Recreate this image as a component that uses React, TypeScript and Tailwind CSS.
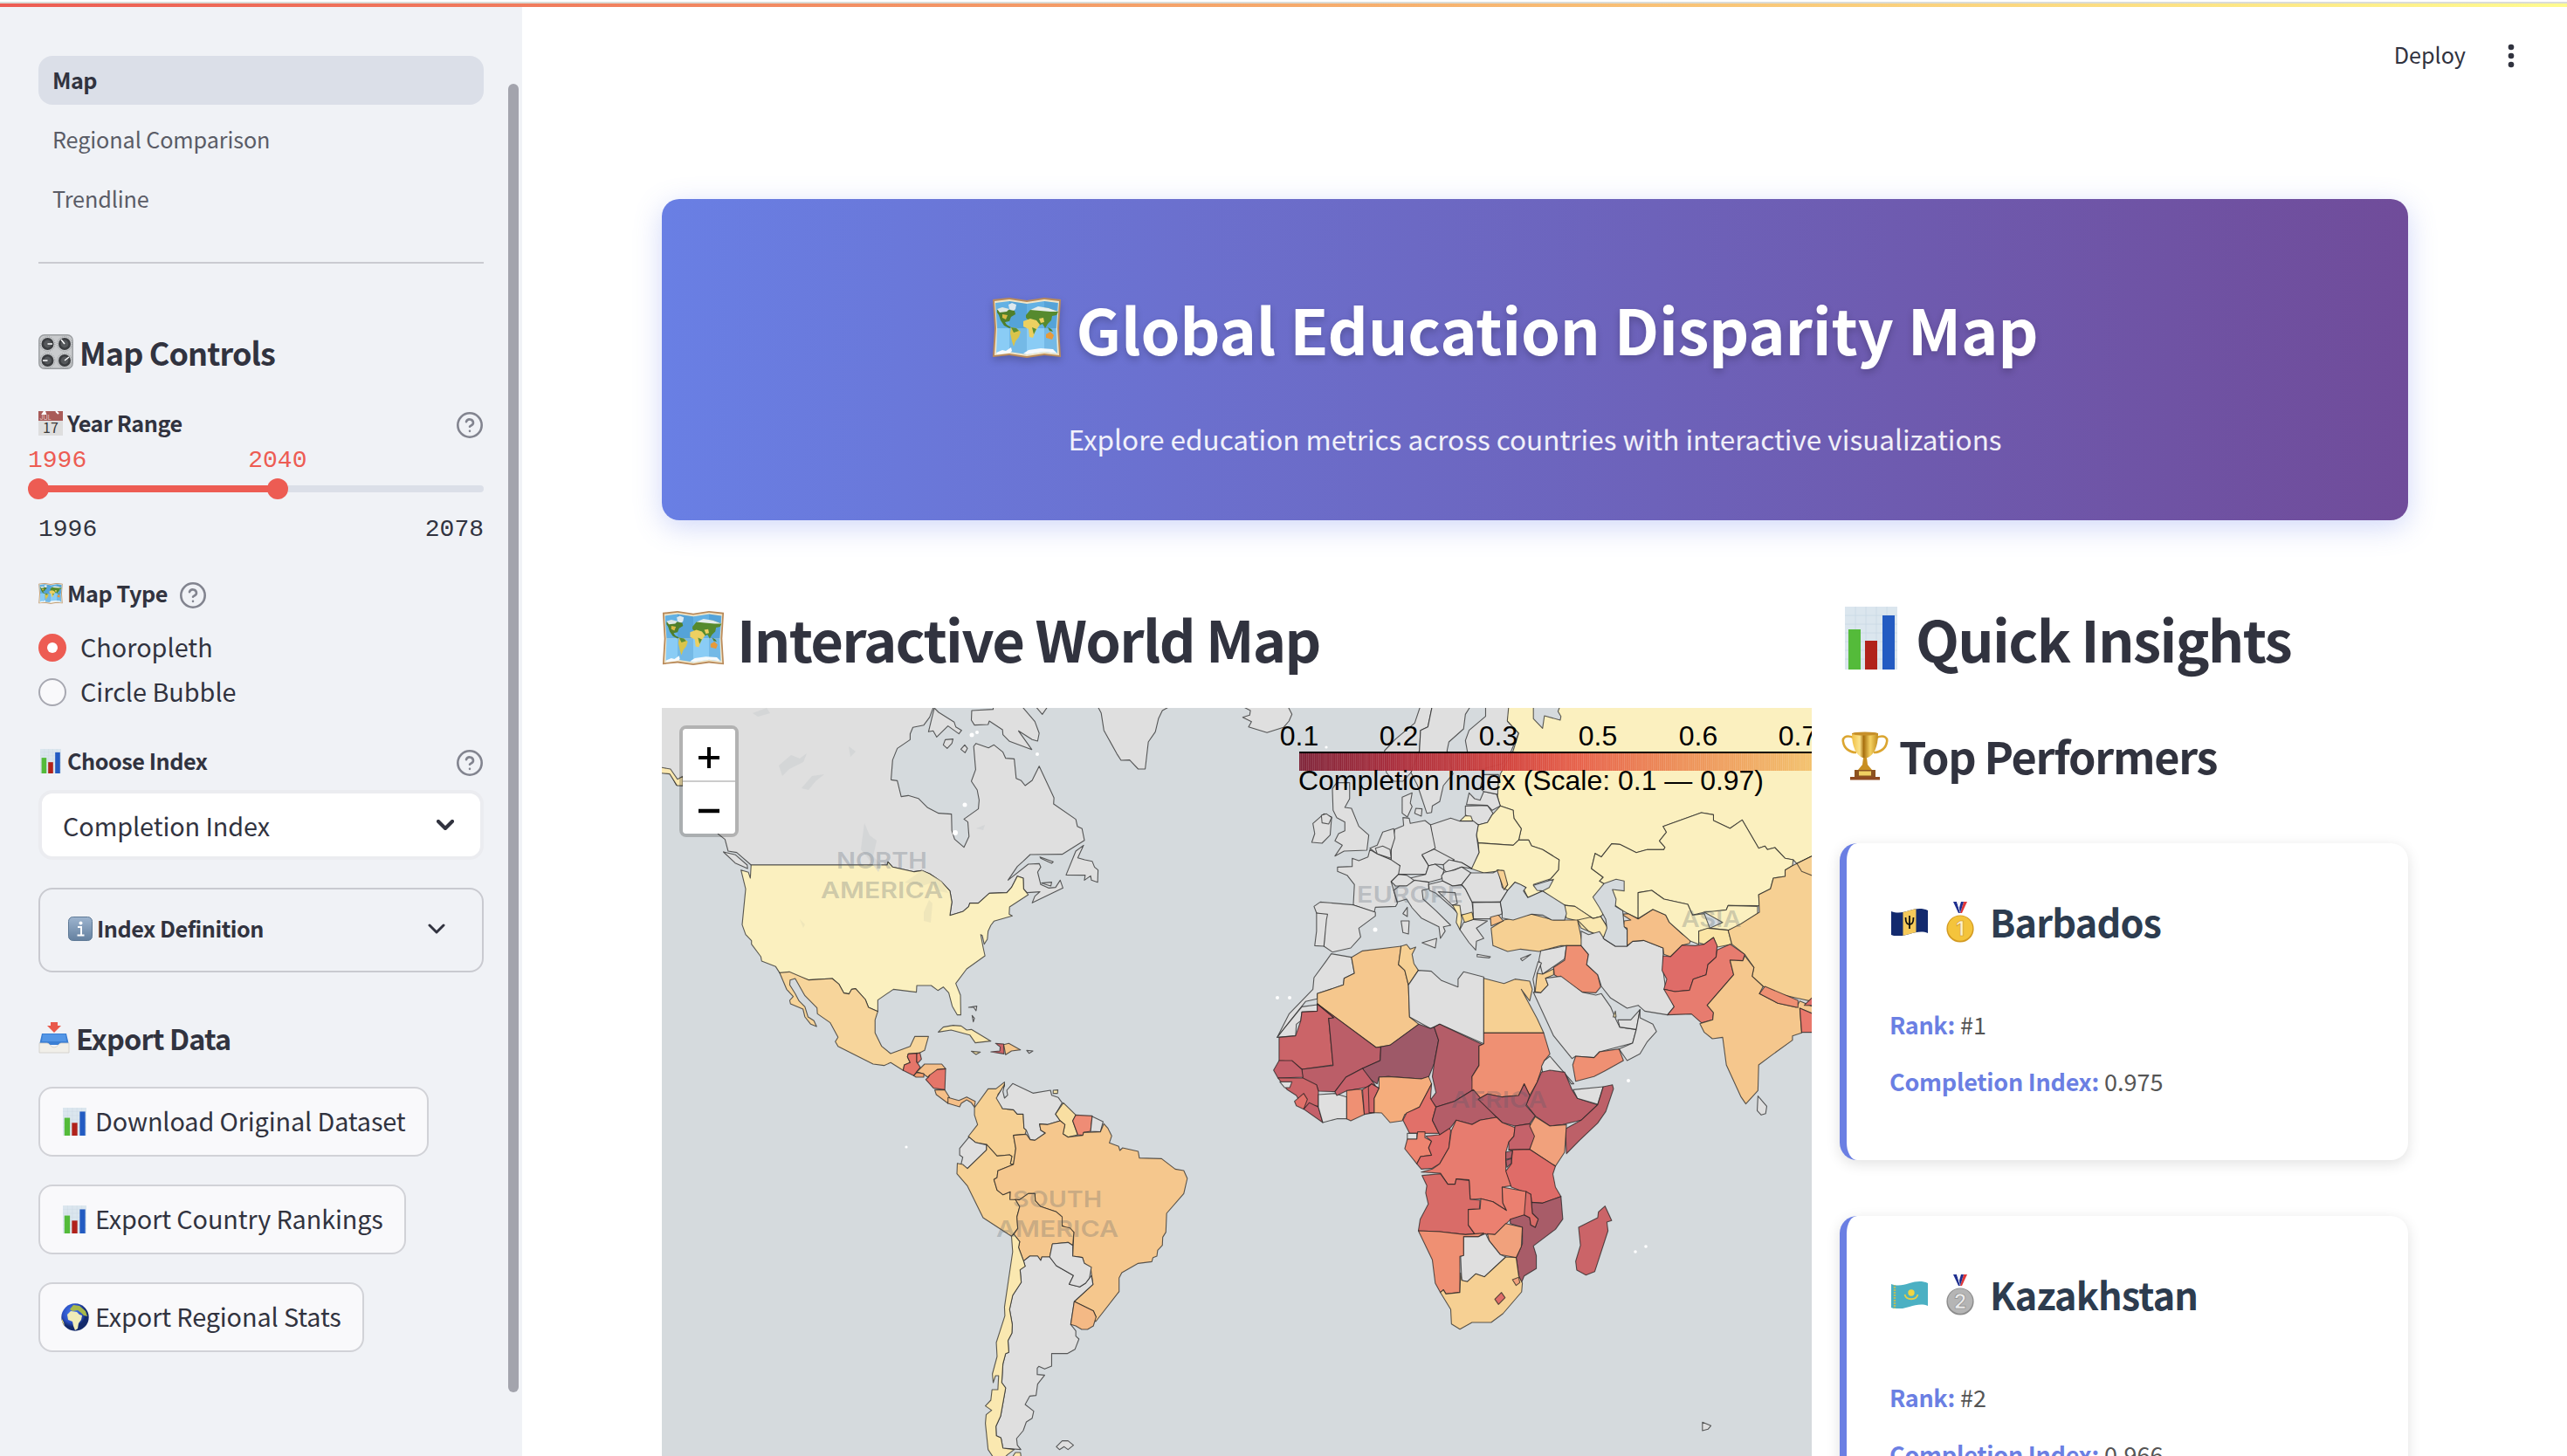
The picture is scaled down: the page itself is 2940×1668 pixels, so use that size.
import type { ReactNode } from "react";

const SEA = "#d5dadd";
const GRAY = "#dfdfdf";
const YELLOW = "#fbf0bf";
const CREAM = "#fae8b0";
const SAND = "#f6d093";
const PEACH = "#f5c78d";
const APRICOT = "#f5bf88";
const CORAL = "#ef9073";
const SALMON = "#e77c6f";
const RED = "#df6c68";
const CRIMSON = "#cb6468";
const WINE = "#bb5e68";
const PLUM = "#b45d68";

type Shape = [string, string];

const northAmerica: Shape[] = [
  [GRAY, "10,25 716,25 705,65 690,92 662,100 655,122 655,142 622,172 610,212 606,280 622,283 632,338 650,334 676,344 700,376 728,395 761,398 762,455 769,484 793,512 806,475 803,425 793,415 830,380 832,350 827,315 812,285 823,245 818,165 824,155 856,170 870,160 893,185 900,206 922,208 927,275 940,283 950,300 968,282 986,233 1024,342 1023,363 1080,416 1084,440 1096,448 1102,488 1045,536 963,537 945,560 930,578 906,625 958,570 986,568 990,580 982,597 990,640 1010,652 1028,650 1040,625 1047,652 968,703 975,680 988,665 955,668 946,655 945,618 930,611 915,650 903,668 858,670 830,704 808,704 805,716 790,733 757,746 762,700 757,662 735,630 705,603 685,592 665,596 610,580 598,562 596,573 247,573 210,530 188,525 180,485 163,467 72,300 55,298 40,260 10,245"],
  [YELLOW, "247,573 596,573 598,562 610,580 665,596 685,592 705,603 735,630 757,662 762,700 757,746 790,733 805,716 808,704 830,704 858,670 903,668 915,650 930,611 945,618 946,655 958,675 910,717 909,742 917,748 870,766 862,780 855,800 853,828 845,845 840,815 836,812 842,855 847,885 800,930 772,980 784,1020 785,1088 776,1088 763,1058 754,1012 740,992 726,1004 709,987 672,987 671,1010 612,1000 572,1037 572,1076 548,1062 540,1035 515,998 505,1000 498,1016 485,1013 472,982 455,963 395,968 345,945 320,943 310,922 274,903 272,888 248,845 248,833 233,812 224,778 233,655 221,590 240,598 245,618"],
  [CREAM, "10,236 40,243 58,278 72,268 72,300 57,300 38,260 10,256"],
  [GRAY, "176,528 207,538 237,573 238,585 206,566"],
  ["#f7d59b", "320,943 345,940 395,968 455,963 472,982 485,1013 498,1016 505,1000 515,998 540,1035 548,1062 572,1076 565,1105 565,1150 582,1196 605,1221 655,1196 667,1162 702,1162 692,1210 680,1218 650,1222 648,1232 655,1252 640,1260 637,1279 605,1252 588,1262 560,1257 470,1196 463,1180 470,1165 450,1115 417,1084 416,1064 385,1022 360,963 347,968 346,985 360,1015 370,1040 385,1060 393,1095 408,1108 415,1128 400,1120 385,1095 380,1068 348,1050 346,1038 355,1025 338,1000"],
  ["#e57569", "650,1222 672,1220 672,1250 681,1268 664,1297 637,1279 640,1260 655,1252 648,1232"],
  ["#e97a6c", "680,1218 684,1240 676,1252 672,1250 672,1222"],
  [APRICOT, "672,1284 692,1257 736,1257 746,1273 724,1276 720,1290 705,1295 700,1302 688,1290"],
  ["#f2a06f", "664,1297 672,1286 690,1290 690,1302 670,1302"],
  ["#e57569", "702,1302 705,1295 724,1276 746,1273 744,1345 715,1340 695,1310"],
  [APRICOT, "718,1346 744,1346 756,1372 752,1392 722,1362"],
  [APRICOT, "752,1372 780,1382 800,1370 822,1385 820,1405 812,1390 800,1380 786,1392 782,1404 752,1392"],
  [CREAM, "727,1147 740,1130 765,1124 786,1126 800,1140 812,1138 862,1178 822,1184 808,1157 760,1140"],
  [CRIMSON, "874,1186 895,1188 896,1222 862,1215 885,1212 886,1198"],
  [PEACH, "895,1190 908,1186 938,1208 915,1212 900,1225"],
  [GRAY, "954,1210 970,1212 960,1220"],
  [CREAM, "812,1213 835,1216 824,1224"],
  [GRAY, "805,1062 826,1058 824,1074 818,1062"],
  [GRAY, "814,1090 820,1100 817,1112"],
  [GRAY, "717,33 728,48 768,82 772,98 787,110 780,122 752,95 723,133 714,112 702,115"],
  [GRAY, "745,142 765,140 762,155 750,172 740,160"],
  [GRAY, "795,160 802,172 796,187 785,175"],
  [GRAY, "813,42 868,38 868,25 940,25 975,80 986,120 982,147 968,142 933,112 967,176 910,148 893,125 892,108 858,78 855,90 820,92 812,75"],
  [GRAY, "975,25 1007,30 994,55"],
  [GRAY, "1135,25 1145,50 1152,110 1185,190 1196,213 1218,212 1240,243 1258,243 1266,150 1284,115 1292,70 1302,42 1325,25"],
  [GRAY, "1100,505 1085,548 1103,555 1122,560 1128,580 1137,590 1136,632 1120,625 1118,610 1102,625 1104,608 1055,607 1080,525"],
  [GRAY, "988,545 1022,562 1018,567 990,550"],
  [GRAY, "992,635 1018,632 1016,645"],
];

const southAmerica: Shape[] = [
  [SAND, "820,105 855,40 875,40 897,17 897,30 880,60 892,108 920,112 930,127 945,127 947,175 953,182 950,196 920,200 926,245 920,300 912,298 916,272 910,267 878,271 851,231 822,224 804,204 828,163 820,130"],
  [GRAY, "897,25 893,50 897,72 905,62 903,45 918,22 970,55 1015,45 1018,62 1035,70 1045,88 1028,127 1040,150 1008,163 987,161 990,182 1002,192 975,217 963,215 953,182 947,175 945,127 930,127 920,112 892,108 876,72"],
  [CREAM, "1022,45 1034,44 1033,56 1022,56"],
  ["#f9dfa2", "1048,88 1080,130 1072,150 1085,198 1060,206 1047,195 1052,163 1040,150 1028,127"],
  ["#ef8c75", "1080,130 1122,133 1118,186 1100,190 1098,200 1085,198 1072,150"],
  [GRAY, "1122,135 1150,153 1143,188 1118,186"],
  [GRAY, "806,206 822,224 851,233 851,250 802,314 785,303 790,275 782,268 782,245"],
  [SAND, "851,231 878,271 910,267 916,272 912,298 920,300 880,322 878,345 870,352 878,388 893,404 912,394 911,420 925,420 936,445 929,480 931,520 915,547 842,483 802,374 775,332 776,296 790,300 802,314 851,250"],
  [PEACH, "953,196 963,215 975,217 1002,192 990,182 987,161 1008,163 1040,150 1052,163 1047,195 1060,206 1098,200 1100,190 1143,188 1152,160 1162,175 1172,202 1166,226 1190,238 1193,252 1200,243 1240,255 1243,278 1300,280 1335,316 1357,321 1366,348 1357,400 1313,468 1311,533 1303,550 1302,578 1290,595 1288,615 1278,620 1275,634 1240,640 1198,672 1191,690 1191,737 1131,840 1125,830 1132,824 1125,803 1076,771 1124,712 1118,655 1102,640 1097,620 1072,615 1075,533 1045,510 1040,475 1030,463 990,445 976,425 975,400 958,400 935,422 911,420 912,394 893,404 878,388 870,352 878,345 880,322 920,300 926,245 920,200"],
  [PEACH, "925,420 935,422 958,400 975,400 976,425 990,445 1030,463 1045,480 1045,512 1065,518 1075,533 1072,578 1060,568 1020,573 1013,618 993,618 990,630 982,615 962,615 946,632 940,610 933,585 936,565 921,540 931,520 929,480 936,445"],
  [GRAY, "946,632 962,615 982,615 990,630 993,618 1013,618 1030,648 1074,682 1063,712 1090,721 1105,708 1120,682 1124,712 1076,771 1067,850 1080,872 1080,890 1088,900 1078,935 1058,950 1018,950 1018,993 1000,1003 985,994 981,1000 981,1022 1000,1024 982,1055 978,1094 962,1096 950,1125 972,1148 968,1172 953,1185 945,1215 928,1242 930,1265 939,1280 893,1275 888,1240 876,1232 875,1200 887,1165 900,1068 890,1050 893,985 900,950 908,946 906,905 916,880 917,850 910,798 918,750 940,705 937,662 950,650"],
  [GRAY, "1013,618 1020,573 1060,568 1072,578 1072,615 1097,620 1102,640 1120,653 1115,690 1105,708 1090,721 1063,712 1074,682 1030,648"],
  [CREAM, "915,547 921,540 936,565 933,585 946,632 950,650 937,662 940,705 918,750 910,798 917,850 916,880 906,905 908,946 900,950 893,985 890,1050 900,1068 887,1165 875,1200 876,1232 888,1240 893,1275 922,1280 905,1297 895,1310 870,1310 855,1280 848,1190 850,1160 864,1145 848,1130 862,1110 865,1074 880,1074 882,1026 874,1026 868,1050 866,1020 878,960 876,912 898,820 897,790 918,600"],
  [CREAM, "915,1310 925,1290 938,1290 940,1310"],
  ["#f4b985", "1076,771 1125,803 1132,824 1125,855 1110,867 1095,867 1080,855 1067,850"],
  [GRAY, "1030,1270 1045,1250 1060,1250 1074,1265 1060,1280 1050,1270 1038,1280"],
];

const eurasia: Shape[] = [
  [GRAY, "-21,25 5,42 3,58 -16,65 8,80 0,98 50,118 95,100 110,78 118,55 106,25"],
  [GRAY, "468,25 452,85 400,140 370,180 375,255 395,285 420,285 442,255 465,180 468,110 488,98 500,25"],
  [GRAY, "500,25 488,98 468,110 465,180 442,255 460,300 485,395 498,392 500,370 520,355 530,300 556,260 540,180 545,150 585,105 590,55 605,25"],
  [GRAY, "645,25 645,62 600,110 590,145 595,180 600,245 630,245 690,225 715,180 735,120 705,80 710,25"],
  [YELLOW, "708,25 704,78 735,120 720,180 700,225 685,260 680,290 675,320 680,350 685,370 720,385 722,412 742,448 735,487 762,487 770,507 800,520 845,555 843,590 822,620 790,658 800,662 850,710 888,715 938,757 958,750 1000,700 967,637 955,628 965,615 933,585 943,533 960,545 988,500 1010,502 1055,530 1085,520 1130,520 1133,512 1118,490 1137,460 1128,440 1232,393 1265,400 1265,420 1310,447 1343,418 1388,515 1405,508 1412,520 1432,513 1460,550 1482,555 1492,568 1545,535 1545,25"],
  [YELLOW, "967,637 955,628 965,615 933,585 943,533 960,545 988,500 1010,502 1055,530 1085,520 1130,520 1133,512 1118,490 1137,460 1128,440 1232,393 1265,400 1265,420 1310,447 1343,418 1388,515 1405,508 1412,520 1432,513 1460,550 1482,555 1480,575 1460,590 1460,612 1428,618 1420,655 1388,675 1390,713 1305,712 1300,727 1262,735 1240,735 1208,745 1195,708 1130,690 1097,660 1060,668 1060,757 1033,740 1018,730 985,700"],
  [SEA, "775,25 775,70 800,103 805,60 848,75 850,62 842,45 848,25"],
  [GRAY, "418,340 445,325 440,360 445,372 432,408 418,395"],
  [GRAY, "455,378 472,380 470,405 452,395"],
  [GRAY, "590,370 650,368 665,395 650,427 625,435 605,420 590,400"],
  [GRAY, "593,365 600,325 615,345 630,350 640,320 675,330 685,370 663,385 650,368"],
  [GRAY, "630,310 640,262 680,262 678,330 640,320"],
  [YELLOW, "575,422 590,403 605,405 610,422"],
  [YELLOW, "625,435 650,427 663,400 685,370 720,385 722,412 742,448 735,487 720,505 625,497 620,470"],
  [YELLOW, "625,497 720,505 735,487 762,487 770,507 800,520 845,555 843,590 822,620 775,640 790,658 800,662 760,685 748,655 755,650 725,632 705,660 695,658 705,640 690,592 640,600 605,585 627,530"],
  [GRAY, "495,435 550,412 575,422 612,422 625,435 620,470 627,530 607,585 580,565 545,555 505,520"],
  [GRAY, "388,520 398,450 422,437 420,410 437,412 440,430 480,420 495,435 508,515 472,540 490,575 482,605 395,605 412,575 385,560"],
  [GRAY, "472,537 505,518 560,555 530,572 508,570 490,575"],
  [GRAY, "530,572 545,555 580,565 607,585 580,580 540,598 532,590"],
  [GRAY, "432,620 482,605 490,575 508,570 532,590 525,620 490,632 455,628"],
  [GRAY, "532,598 560,590 580,580 605,600 580,640 555,645 528,628 525,610"],
  [GRAY, "330,515 350,505 365,460 395,448 398,480 388,520 388,555 350,535"],
  [GRAY, "345,515 365,508 385,520 388,550 350,535"],
  [GRAY, "242,580 282,578 282,550 300,558 325,545 330,520 350,535 388,555 412,575 408,605 388,630 395,660 405,705 400,715 345,718 342,735 285,710 288,640 268,608 242,595"],
  [GRAY, "388,630 408,605 430,608 450,625 435,645 400,645"],
  [GRAY, "395,660 410,645 430,645 452,625 490,632 490,655 472,660 475,690 510,730 550,780 530,785 535,800 522,825 518,785 470,755 445,720 430,690 405,700"],
  [GRAY, "472,840 512,825 508,858"],
  [GRAY, "415,765 437,765 435,810 420,805"],
  [GRAY, "420,740 432,718 432,750"],
  [GRAY, "178,715 195,700 285,710 345,735 345,748 300,790 305,820 278,858 228,872 205,852 210,745 185,738"],
  [GRAY, "185,738 215,742 212,760 205,852 180,850 185,800"],
  [GRAY, "230,385 228,310 240,290 275,290 275,345 262,375 280,378 300,440 327,470 322,522 260,525 235,542 255,505 235,490 245,465 262,455 262,425 240,410"],
  [GRAY, "175,430 205,397 226,408 222,470 200,498 172,495 180,465"],
  [GRAY, "198,402 212,397 226,410 218,432 200,428"],
  [GRAY, "490,640 528,628 555,645 580,642 590,655 608,700 612,740 575,745 555,720 510,670 492,660"],
  [GRAY, "516,665 562,668 568,705 555,712"],
  [GRAY, "580,640 605,600 665,600 680,590 690,650 705,660 685,700 608,700 590,655"],
  [GRAY, "610,702 685,700 690,740 660,758 612,758"],
  [SAND, "676,590 695,592 705,640 695,658"],
  [GRAY, "575,795 585,770 612,760 650,765 620,790 640,825 620,835 618,865 600,840"],
  [CREAM, "555,710 575,712 580,760 575,795 565,770 568,740"],
  ["#f8d98f", "580,745 608,735 612,760 588,770"],
  [CREAM, "850,710 888,715 938,757 958,750 978,790 965,825 940,808 925,800 905,790 895,765 865,755"],
  [CREAM, "895,762 930,752 938,757 958,750 978,790 965,825 940,808 925,800"],
  [SAND, "660,790 695,762 770,742 830,762 895,762 910,850 850,850 790,870 740,862 705,870 665,850"],
  [APRICOT, "658,752 680,745 693,765 660,782"],
  [GRAY, "622,880 658,888 655,892 622,888"],
  [GRAY, "740,895 768,880 745,902"],
  [GRAY, "795,868 865,850 860,895 800,948 790,900"],
  [CORAL, "865,850 905,850 925,880 920,915 950,950 958,992 945,1012 908,1010 832,950 830,925 860,900"],
  [SAND, "785,945 800,948 830,930 830,950 808,962 815,985 795,1012 778,1008"],
  [GRAY, "788,905 797,910 785,945 780,1008 774,965"],
  [GRAY, "905,800 925,812 955,802 968,828 998,852 1030,852 1045,835 1075,832 1128,858 1128,935 1135,1000 1158,1060 1140,1088 1078,1075 1060,1055 1030,1065 985,1030 960,990 950,950 920,915 925,880 905,850"],
  [APRICOT, "1015,742 1033,740 1060,758 1100,725 1135,745 1145,770 1180,810 1203,830 1200,842 1180,848 1148,888 1130,880 1128,858 1075,832 1045,835 1030,850 1030,790 1020,785 1022,765 1040,762"],
  [YELLOW, "1060,668 1097,660 1130,690 1195,708 1208,745 1240,740 1255,790 1225,800 1225,845 1203,835 1145,770 1135,745 1100,725 1060,757"],
  [YELLOW, "1240,735 1300,727 1305,712 1385,715 1385,740 1330,785 1305,797 1255,790 1290,770"],
  ["#fbe5a5", "1225,800 1250,790 1305,797 1315,845 1275,855 1265,822 1240,845 1225,840"],
  [SEA, "967,637 1000,622 1022,628 1022,662 990,657 1000,690 998,715 1018,730 1020,755 1022,785 1030,795 1030,852 998,852 965,825 975,790 972,760 955,720 937,683"],
  [SEA, "725,632 740,640 755,650 748,662 760,685 800,662 860,710 865,740 860,762 825,762 800,745 770,742 720,762 690,755 690,735 685,700 705,660"],
  [SEA, "775,643 830,622 818,650 800,662 785,660"],
  [SAND, "1545,535 1492,568 1480,575 1460,590 1460,612 1428,618 1420,655 1388,675 1390,735 1340,775 1305,797 1315,845 1350,880 1375,925 1370,955 1400,990 1440,1015 1490,1030 1545,1045"],
  [SAND, "1492,568 1545,535 1545,615 1505,595"],
  [RED, "1128,885 1148,888 1180,848 1215,850 1240,845 1265,822 1275,850 1272,890 1250,915 1245,950 1210,965 1200,1003 1160,1008 1130,1000 1138,965 1125,935"],
  [SALMON, "1275,865 1310,845 1350,880 1345,902 1310,900 1320,950 1248,1055 1265,1080 1263,1105 1232,1115 1205,1085 1140,1088 1158,1060 1130,1000 1160,1008 1200,1003 1210,965 1245,950 1250,915 1272,890"],
  [PEACH, "1350,885 1375,925 1370,955 1400,990 1390,1015 1440,1048 1490,1062 1500,1040 1545,1065 1545,1088 1500,1065 1505,1150 1480,1160 1480,1175 1425,1225 1388,1260 1386,1348 1353,1394 1340,1370 1300,1260 1290,1165 1262,1170 1240,1148 1228,1118 1263,1105 1265,1080 1248,1055 1320,950 1310,900 1345,902"],
  [CORAL, "1405,990 1495,1038 1495,1063 1440,1048 1390,1015"],
  ["#e9786c", "1500,1065 1545,1090 1545,1148 1505,1148"],
  [RED, "1512,1055 1532,1030 1545,1030 1545,1056"],
  [GRAY, "1386,1367 1410,1402 1407,1427 1395,1432 1384,1417"],
  [GRAY, "775,1010 795,1012 815,985 808,962 850,955 908,1010 945,1020 960,1015 985,1060 1000,1105 1010,1130 1055,1138 1045,1185 955,1215 940,1235 890,1230 880,1238 830,1160"],
  [GRAY, "1005,1105 1040,1105 1065,1070 1055,1138 1010,1130"],
  [GRAY, "1065,1070 1065,1098 1100,1120 1110,1145 1085,1180 1065,1222 1030,1245 1008,1205 1045,1185 1055,1138"],
  [CORAL, "890,1230 940,1235 955,1215 1008,1205 1020,1245 970,1280 940,1300 890,1316 882,1260"],
  [CREAM, "992,1095 998,1075 1000,1095"],
];

const africa: Shape[] = [
  [GRAY, "225,878 280,890 288,945 260,962 258,985 187,1015 187,1033 155,1042 100,1130 78,1165 110,1085 175,1000 178,960 210,905"],
  [GRAY, "78,1165 100,1130 145,1060 187,1053 187,1075 145,1078 142,1108 130,1120 128,1160"],
  [PEACH, "280,890 310,868 415,852 412,880 408,915 425,935 435,985 438,1095 463,1120 385,1192 347,1200 187,1050 187,1015 258,985 260,962 288,945"],
  [SAND, "415,852 430,846 440,862 455,855 445,880 450,912 462,935 435,985 425,935 408,915"],
  [GRAY, "435,985 462,935 497,938 525,970 570,992 570,965 585,940 640,958 640,1187 520,1120 495,1135 438,1095"],
  [SAND, "640,962 695,980 725,965 765,972 772,1000 765,1040 742,1000 785,1100 803,1150 640,1150"],
  [CRIMSON, "83,1165 128,1160 142,1108 145,1078 187,1075 187,1050 232,1098 218,1100 230,1260 145,1275 118,1248 83,1245"],
  [WINE, "187,1050 347,1200 360,1198 358,1245 310,1272 265,1302 235,1352 190,1350 185,1330 148,1320 145,1275 230,1262 218,1100 232,1098"],
  ["#9e5968", "463,1120 495,1135 505,1130 517,1175 505,1255 490,1302 470,1308 380,1300 355,1302 350,1325 320,1302 310,1272 358,1245 360,1198 385,1192"],
  [PLUM, "520,1120 637,1190 627,1195 627,1262 608,1300 612,1345 560,1385 510,1405 495,1380 510,1355 500,1300 505,1255 517,1175 505,1130"],
  [CORAL, "640,1150 803,1150 820,1222 805,1245 785,1320 765,1365 750,1325 735,1365 690,1370 650,1360 625,1378 608,1345 608,1300 627,1262 627,1195 640,1187"],
  [GRAY, "805,1245 820,1230 885,1325 878,1325 860,1290 800,1285 797,1265"],
  [WINE, "797,1285 820,1278 860,1285 880,1345 895,1375 950,1397 905,1450 855,1465 820,1470 780,1435 755,1395 785,1320"],
  [GRAY, "883,1345 965,1335 950,1395 895,1375"],
  ["#bd6068", "965,1335 990,1328 993,1342 972,1420 950,1460 900,1520 865,1565 862,1480 905,1450 950,1397"],
  ["#c4606a", "83,1245 118,1245 145,1275 148,1302 80,1305 68,1278"],
  [CRIMSON, "80,1305 148,1305 185,1328 190,1350 190,1402 165,1400 150,1410 130,1365 105,1345"],
  [GRAY, "85,1318 118,1318 112,1338 98,1338"],
  ["#e17069", "125,1385 150,1358 160,1378 150,1412 130,1400"],
  ["#c4606a", "150,1412 165,1390 190,1405 202,1458"],
  [GRAY, "190,1362 235,1358 267,1370 267,1445 240,1445 202,1458 190,1405"],
  ["#c5606a", "235,1352 265,1302 310,1272 345,1330 300,1342 265,1350 240,1365"],
  [CORAL, "267,1348 300,1343 308,1345 315,1430 278,1452 267,1445"],
  ["#d26668", "310,1345 335,1325 355,1340 342,1375 342,1424 315,1430"],
  ["#d26668", "326,1335 335,1325 355,1340 342,1375 342,1424 328,1424"],
  ["#f5ad7c", "355,1302 380,1300 470,1308 490,1300 498,1325 465,1405 425,1430 418,1452 385,1458 362,1425 342,1424 342,1375 355,1340"],
  ["#e17069", "498,1325 495,1375 510,1405 500,1450 518,1495 438,1495 420,1450 430,1425 465,1405"],
  [GRAY, "432,1495 458,1495 458,1515 432,1515"],
  ["#ee8570", "460,1490 480,1490 480,1510 498,1522 490,1545 498,1570 468,1575 458,1600 425,1548 432,1515 458,1515"],
  [RED, "518,1500 545,1475 550,1485 545,1545 520,1600 500,1615 470,1618 458,1600 468,1575 498,1570 490,1545 498,1522 482,1505"],
  [PLUM, "510,1405 560,1385 612,1345 675,1440 630,1450 608,1465 565,1450 550,1475 520,1500 500,1450"],
  [PLUM, "625,1378 650,1360 690,1370 735,1365 750,1325 765,1365 755,1400 780,1435 765,1462 725,1470 690,1458"],
  [SALMON, "565,1450 608,1465 630,1450 675,1440 690,1458 725,1475 722,1505 708,1525 700,1560 700,1620 715,1675 690,1680 692,1735 702,1760 665,1730 632,1720 603,1722 600,1655 565,1652 562,1670 542,1670 522,1632 470,1628 500,1618 520,1600 545,1545 552,1485"],
  ["#c5626a", "725,1470 765,1462 780,1505 765,1550 708,1552 708,1525 722,1505"],
  ["#f1a17c", "780,1438 820,1470 865,1465 860,1560 835,1608 765,1550 778,1505 765,1470"],
  [RED, "708,1552 765,1550 835,1608 828,1635 835,1680 850,1712 800,1735 770,1732 768,1705 715,1680 700,1625 715,1600 718,1555"],
  [PLUM, "700,1560 718,1555 715,1580 700,1585"],
  [PLUM, "700,1588 715,1582 715,1598 703,1612"],
  ["#d96c68", "472,1640 522,1634 542,1670 562,1670 565,1652 600,1657 603,1722 630,1725 628,1755 598,1757 598,1810 615,1840 590,1843 520,1833 462,1830 467,1790 489,1738 482,1700 485,1675"],
  ["#eb8070", "598,1757 630,1755 632,1720 665,1730 702,1760 692,1735 690,1680 755,1695 755,1775 712,1792 670,1843 615,1840 598,1810"],
  ["#a85c68", "770,1732 800,1735 850,1712 855,1790 835,1825 775,1882 783,1915 783,1960 750,1985 742,2010 735,1985 728,1922 745,1875 745,1818 712,1805 712,1790 750,1775 765,1785 768,1810 780,1818 788,1790 772,1770"],
  ["#d96c68", "755,1695 768,1705 772,1770 788,1790 780,1818 768,1810 765,1785 750,1775"],
  ["#f1a17c", "650,1840 670,1843 700,1805 745,1818 742,1885 728,1922 685,1912 655,1865"],
  [GRAY, "585,1850 625,1850 645,1840 655,1865 685,1912 700,1920 642,1988 618,1978 595,2005 580,2000 577,1918 585,1915"],
  [CORAL, "462,1830 520,1833 590,1843 640,1838 625,1850 585,1850 585,1915 575,1918 575,2042 537,2047 530,2033 522,2042 508,2010 500,1930"],
  [SAND, "522,2042 530,2033 537,2047 575,2042 577,1975 580,2000 595,2005 618,1978 642,1988 700,1920 728,1922 735,1985 745,2010 743,2040 692,2115 660,2145 608,2145 575,2168 552,2150 550,2100"],
  [RED, "670,2065 688,2042 698,2060 680,2083"],
  ["#f1a17c", "718,1998 735,1990 738,2008 728,2018"],
  [CRIMSON, "970,1745 988,1795 975,1800 978,1830 942,1970 918,1982 893,1965 890,1935 903,1880 898,1818 950,1785 952,1765"],
  [GRAY, "1235,2488 1258,2500 1250,2512 1235,2517"],
];

function Shapes({ list, transform }: { list: Shape[]; transform: string }) {
  return (
    <g transform={transform}>
      {list.map(([fill, points], i) => (
        <polygon key={i} points={points} fill={fill} vectorEffect="non-scaling-stroke" />
      ))}
    </g>
  );
}

const continentLabels: [string, number, number, number][] = [
  ["NORTH", 252, 184, 104],
  ["AMERICA", 252, 218, 140],
  ["SOUTH", 453, 572, 102],
  ["AMERICA", 453, 606, 140],
  ["AFRICA", 959, 458, 110],
  ["EUROPE", 857, 223, 122],
  ["ASIA", 1202, 251, 69],
];

const ticks: [string, number][] = [
  ["0.1", 730],
  ["0.2", 844],
  ["0.3", 958],
  ["0.5", 1072],
  ["0.6", 1187],
  ["0.7", 1301],
];

function WorldMap() {
  return (
    <div className="relative h-[857px] w-[1317px] overflow-hidden bg-[#d5dadd]">
      <svg viewBox="0 0 1317 857" className="block h-[857px] w-[1317px]">
        <defs>
          <linearGradient id="scale" x1="0" x2="1">
            <stop offset="0" stopColor="#7a1a30" />
            <stop offset="0.18" stopColor="#a52232" />
            <stop offset="0.42" stopColor="#d23b35" />
            <stop offset="0.55" stopColor="#e65a42" />
            <stop offset="0.75" stopColor="#ec8a50" />
            <stop offset="1" stopColor="#f2be66" />
          </linearGradient>
          <pattern id="ticks" width="2.35" height="20" patternUnits="userSpaceOnUse">
            <rect width="0.9" height="20" fill="#ffffff" opacity="0.18" />
          </pattern>
        </defs>
        <g stroke="#1c1c1c" strokeOpacity="0.7" strokeWidth="1.1" strokeLinejoin="round">
          <Shapes list={northAmerica} transform="translate(-8 -11) scale(0.446429 0.333333)" />
          <Shapes list={southAmerica} transform="translate(-8 423) scale(0.446429 0.333333)" />
          <Shapes list={eurasia} transform="translate(672 -11) scale(0.42091 0.333333)" />
          <Shapes list={africa} transform="translate(672 -11) scale(0.42091 0.333333)" />
        </g>
        <g fill="#c9cdcf" opacity="0.5">
          <path d="M134 66l14-12 10 4 8-6-4 10-16 8-8 8zM160 92l12-14 14-2-10 8-8 10zM232 132l6 14 8 6-4 18 10 10-4 8-12-16-8-10zM360 138l10-4-2 6zM214 44l8 6-6 6zM104 6l16-6 4 6-14 4z" />
        </g>
        <g fill="#e8e0b8" opacity="0.6">
          <path d="M278 200l20-14 22 12 8 14-10-2-8-10-12 4zM300 234l6-14 4 4-2 22-8-2zM158 242l6 6-2 4z" />
        </g>
        <g fill="#fff">
          <circle cx="355" cy="31" r="2.5" />
          <circle cx="361" cy="28" r="2" />
          <circle cx="430" cy="53" r="2" />
          <circle cx="347" cy="111" r="2.5" />
          <circle cx="336" cy="143" r="3" />
          <circle cx="280" cy="503" r="1.6" />
          <circle cx="817" cy="254" r="2.5" />
          <circle cx="705" cy="332" r="2" />
          <circle cx="719" cy="332" r="2" />
          <circle cx="1107" cy="427" r="2" />
          <circle cx="1115" cy="623" r="1.8" />
          <circle cx="1127" cy="617" r="1.8" />
          <circle cx="761" cy="45" r="1.6" />
        </g>
        <g fill="#4c5a68" fillOpacity="0.27" fontFamily="Inter, sans-serif" fontWeight="600" fontSize="25.500">
          {continentLabels.map(([t, x, y, w], i) => (
            <text key={i} x={x - w / 2} y={y} textLength={w} lengthAdjust="spacingAndGlyphs">
              {t}
            </text>
          ))}
        </g>
        <rect x="730" y="52" width="587" height="20" fill="url(#scale)" opacity="0.96" />
        <rect x="730" y="52" width="587" height="20" fill="url(#ticks)" />
        <rect x="730" y="50" width="587" height="2" fill="#000" />
        <g fill="#000" fontFamily="Liberation Sans, Arial, sans-serif" fontSize="32">
          {ticks.map(([t, x]) => (
            <text key={t} x={x} y="43" textAnchor="middle">
              {t}
            </text>
          ))}
          <text x="729" y="94" textLength="533" lengthAdjust="spacingAndGlyphs">
            Completion Index (Scale: 0.1 — 0.97)
          </text>
        </g>
      </svg>
      <div className="absolute left-5 top-5 flex h-[128px] w-[68px] flex-col overflow-hidden rounded-[8px] border-4 border-black/20 bg-clip-padding">
        <button className="flex h-[61px] items-center justify-center border-b-2 border-[#ccc] bg-white pt-1.5">
          <svg width="26" height="26" viewBox="0 0 26 26" stroke="#000" strokeWidth="4">
            <path d="M1 13h24M13 1v24" />
          </svg>
        </button>
        <button className="flex flex-1 items-center justify-center bg-white pt-1.5">
          <svg width="26" height="26" viewBox="0 0 26 26" stroke="#000" strokeWidth="4.5">
            <path d="M1 13h24" />
          </svg>
        </button>
      </div>
    </div>
  );
}

function MapIcon({ className }: { className: string }) {
  return (
    <svg viewBox="0 0 80 70" preserveAspectRatio="none" className={className}>
      <path d="M1 2L20 0l20 3 20-3 19 2-2 33 2 33-19-2-20 3-20-3-19 2 2-33z" fill="#b98a5a" />
      <path d="M3 4l17-2 20 3 20-3 17 2-2 31 2 31-17-2-20 3-20-3-17 2 2-31z" fill="#f2e6c8" />
      <path d="M4 6l16-2 20 3 20-3 16 2-2 29H6z" fill="#63b1e4" />
      <path d="M6 35h68l1 29-15-2-20 3-20-3-15 2z" fill="#8accf5" />
      <path d="M20 4l20 3v58l-20-3zM60 4l15 2-2 29 2 29-15-2z" fill="#1f6ea8" opacity="0.2" />
      <path d="M19 8l4-2 5 2-1 5-3 3-4-3z" fill="#dce8ef" />
      <path d="M6 14l6-2 8 2 6 1 1 4-5 3-2 5-5 1 2 3 5 3-2 1-6-3-4-6-2-6-2-3z" fill="#4f7f2b" />
      <path d="M12 19l6 1-2 5-4-2z" fill="#d9b944" />
      <path d="M6 13l6-2 8 2-3 3-8 1z" fill="#dfe7e2" />
      <path d="M22 34l6 1 5 4-2 6-4 5-2 6-2-6-2-9z" fill="#d9c44a" />
      <path d="M22 34l6 1 3 3-6 2z" fill="#5c8f34" />
      <path d="M39 20l5-6 9-3 12 1 11 4-2 4-5 1-1 5-4 4-3 5-3-5-4 2-4-6-8 0-3-3z" fill="#568a2e" />
      <path d="M36 27l8-3 7 2 4 5-5 7-3 8-4-1-1-9-6-3z" fill="#ecd061" />
      <path d="M46 34l5 2-3 6z" fill="#5c8f34" />
      <path d="M44 14l9-4 12 2 11 4-9 0-12-1z" fill="#e6edec" />
      <path d="M54 24l5-1 1 5-4 1z" fill="#ecd061" />
      <path d="M62 42l5-3 4 4-2 5-7-2z" fill="#e79a3a" />
      <path d="M64 34l4 2 2 3-4-1z" fill="#4f7f2b" />
      <path d="M5 63l7-3 4 1 6-4 1 4-2 2-15 2zM36 64l6-4 14-2 14 1 5 5-15-2-20 3z" fill="#f7fafc" />
    </svg>
  );
}

function ChartIcon({ className }: { className: string }) {
  return (
    <svg viewBox="0 0 60 72" preserveAspectRatio="none" className={className}>
      <rect width="60" height="72" fill="#dbe6ee" />
      <path d="M0 10h60M0 20h60M0 30h60M0 40h60M0 50h60M0 60h60M12 0v72M24 0v72M36 0v72M48 0v72" stroke="#c9d8e3" strokeWidth="0.8" />
      <rect x="4" y="26" width="14" height="46" fill="#54bb3a" />
      <rect x="23" y="39" width="14" height="33" fill="#b1221b" />
      <rect x="43" y="10" width="14" height="62" fill="#235bc2" />
    </svg>
  );
}

function KnobsIcon() {
  const knobs: [number, number, number, number][] = [
    [10.5, 11, 16, 11],
    [30, 11, 26, 6],
    [10.5, 30, 5, 30],
    [30, 30, 35, 26],
  ];
  return (
    <svg viewBox="0 0 40 40" className="size-10">
      <rect x="0.8" y="0.8" width="38.4" height="38.4" rx="6" fill="#c9cbcd" stroke="#9a9da0" strokeWidth="1.4" />
      {knobs.map(([x, y, a, b], i) => (
        <g key={i}>
          <circle cx={x} cy={y} r="8.4" fill="none" stroke="#85888b" strokeWidth="0.9" strokeDasharray="1 1.4" />
          <circle cx={x} cy={y} r="7" fill="#3b3d40" />
          <circle cx={x} cy={y} r="4.4" fill="#55585b" />
          <path d={`M${x} ${y}L${a} ${b}`} stroke="#fff" strokeWidth="1.5" />
        </g>
      ))}
    </svg>
  );
}

function CalendarIcon() {
  return (
    <svg viewBox="0 0 28 28" className="size-7">
      <rect width="28" height="28" fill="#dedede" />
      <rect width="28" height="11" fill="#a95b58" />
      <path d="M5 3l2-3 1 3zM20 0l3 3" stroke="#fff" strokeWidth="2" fill="#fff" />
      <text x="1.5" y="9.5" fontSize="7" fill="#e6c8c6" fontFamily="Inter, sans-serif">JUL</text>
      <text x="14" y="25" fontSize="16" textAnchor="middle" fill="#3a3a3a" fontFamily="Noto Sans CJK SC, sans-serif">17</text>
    </svg>
  );
}

function InfoIcon() {
  return (
    <svg viewBox="0 0 28 28" className="size-7">
      <defs>
        <linearGradient id="info" x2="0" y2="1">
          <stop stopColor="#9db4cf" />
          <stop offset="1" stopColor="#64809f" />
        </linearGradient>
      </defs>
      <rect x="0.5" y="0.5" width="27" height="27" rx="5" fill="url(#info)" stroke="#5f7a96" />
      <circle cx="14.500" cy="7.6" r="2" fill="#fff" />
      <path d="M11 12h4v9M10.5 21.5h8" stroke="#fff" strokeWidth="1.9" fill="none" />
    </svg>
  );
}

function InboxIcon() {
  return (
    <svg viewBox="0 0 36 36" className="size-9">
      <path d="M14 0h8v4h4l-8 8-8-8h4z" fill="#e9584a" />
      <path d="M4 13h28l3 13H1z" fill="#3b7fd4" />
      <path d="M5 14h26l1 8H4z" fill="#5396e6" />
      <path d="M1 24h9c3 0 4 5 8 5s5-5 8-5h9v11H1z" fill="#f1efe9" stroke="#cfcdc6" strokeWidth="0.8" />
    </svg>
  );
}

function GlobeIcon() {
  return (
    <svg viewBox="0 0 32 32" className="size-8">
      <defs>
        <radialGradient id="globe" cx="0.4" cy="0.35">
          <stop stopColor="#4a7df0" />
          <stop offset="0.7" stopColor="#2a50c4" />
          <stop offset="1" stopColor="#132a6b" />
        </radialGradient>
      </defs>
      <circle cx="16" cy="16" r="15.7" fill="url(#globe)" />
      <path d="M7 13l4-4 7 1 3 3 3 1-1 5-3 4-1 6-3 2-2-5-1-5-5-2z" fill="#f0ecb8" />
      <path d="M10 7l4-5 7 1 7 6 2 6-4-1-3-3-4-3-6 1z" fill="#a8b84a" />
      <path d="M1 18l2 4 1 4-3-5z" fill="#e9dc7a" />
    </svg>
  );
}

function TrophyIcon() {
  return (
    <svg viewBox="0 0 54 56" className="h-14 w-[54px]">
      <defs>
        <linearGradient id="gold" x2="1">
          <stop stopColor="#f0bf45" />
          <stop offset="0.3" stopColor="#fbe38b" />
          <stop offset="0.45" stopColor="#a8700f" />
          <stop offset="0.7" stopColor="#f5d262" />
          <stop offset="1" stopColor="#c08a1c" />
        </linearGradient>
      </defs>
      <path d="M14 7C4 3 1 8 2 12c1 7 7 12 15 12M40 7c10-4 13 1 12 5-1 7-7 12-15 12" fill="none" stroke="#dba52f" strokeWidth="2.6" />
      <path d="M12 2h30c0 16-5 25-12 28h-6C17 27 12 18 12 2z" fill="url(#gold)" />
      <ellipse cx="27" cy="2.5" rx="15" ry="2" fill="#c7902a" />
      <path d="M25 30h4l1 8 5 6H19l5-6z" fill="#c98f22" />
      <path d="M15 44h24v8H15z" fill="#8d5220" />
      <rect x="20" y="45.5" width="14" height="5" fill="#f0cf62" />
      <path d="M10 52h34v3.5H10z" fill="#8f4a22" />
    </svg>
  );
}

function Medal({ n, light, dark }: { n: string; light: string; dark: string }) {
  return (
    <svg viewBox="0 0 32 47" className="h-[47px] w-8">
      <path d="M8 0h4l4 13h-2z" fill="#1f2f8f" />
      <path d="M12 0h3l3 9-2 4z" fill="#f4f4f8" />
      <path d="M24 0h-4l-4 13h2z" fill="#e0383a" />
      <path d="M20 0h-3l-2 7 1 6z" fill="#1f2f8f" />
      <circle cx="16" cy="31" r="15.6" fill={dark} />
      <circle cx="16" cy="30.5" r="14.200" fill={light} />
      <text x="16" y="39" fontSize="23" fontWeight="700" textAnchor="middle" fill="#fff" fillOpacity="0.75" stroke={dark} strokeWidth="0.7" fontFamily="Inter, sans-serif">
        {n}
      </text>
    </svg>
  );
}

const WAVE = "M0 3C8 6 14 4 21 2s14-3 21 0v26c-7-3-14-1-21 1s-14 4-21 1z";

function BarbadosFlag() {
  return (
    <svg viewBox="0 0 42 31" className="h-[31px] w-[42px]">
      <clipPath id="bb"><path d={WAVE} /></clipPath>
      <g clipPath="url(#bb)">
        <rect width="42" height="31" fill="#132a6e" />
        <rect x="13.500" width="15" height="31" fill="#f5c95a" />
        <path d="M21 8v15M16.5 10c0 7 2 8 4.500 8s4.500-1 4.500-8" fill="none" stroke="#111" strokeWidth="1.8" />
      </g>
    </svg>
  );
}

function KazakhstanFlag() {
  return (
    <svg viewBox="0 0 42 31" className="h-[31px] w-[42px]">
      <clipPath id="kz"><path d={WAVE} /></clipPath>
      <g clipPath="url(#kz)">
        <rect width="42" height="31" fill="#4bb0c3" />
        <path d="M4 0v31" stroke="#b9bd5c" strokeWidth="2.4" strokeDasharray="2 1" />
        <circle cx="23" cy="13" r="3.700" fill="#f0d541" />
        <path d="M15.500 15c2 7 13 7 15 0" fill="none" stroke="#e6cf45" strokeWidth="1.800" />
      </g>
    </svg>
  );
}

function Help() {
  return (
    <svg viewBox="0 0 32 32" className="mt-1 size-8" fill="none" stroke="#82848f" strokeWidth="2.6" strokeLinecap="round" strokeLinejoin="round">
      <circle cx="16" cy="16" r="13.700" />
      <path d="M12 12.200a4.100 4.100 0 0 1 8 1.300c0 2.700-4 3.600-4 4.300M16 22.800v.05" />
    </svg>
  );
}

function Chevron({ w }: { w: string }) {
  return (
    <svg viewBox="0 0 20 12" className="h-3 w-5" fill="none" stroke="#31333f" strokeWidth={w} strokeLinecap="round" strokeLinejoin="round">
      <path d="M2 2l8 8 8-8" />
    </svg>
  );
}

function Label({ icon, text, help }: { icon: ReactNode; text: string; help?: "near" | "far" }) {
  return (
    <div className="flex h-[30px] items-center">
      <span className="flex w-[33px] shrink-0 items-center">{icon}</span>
      <span className="text-[25.2px] font-bold tracking-[-0.018em]">{text}</span>
      {help === "near" && <span className="ml-[13px]"><Help /></span>}
      {help === "far" && <span className="ml-auto"><Help /></span>}
    </div>
  );
}

function ExportButton({ icon, text, width }: { icon: ReactNode; text: string; width: string }) {
  return (
    <button className={`flex h-20 items-center rounded-[16px] border-2 border-[#d1d2d7] bg-[#f9f9fb] pb-[1px] pl-[24px] text-[28.8px] leading-none ${width}`}>
      <span className="flex w-[39px] shrink-0 items-center">{icon}</span>
      <span className="whitespace-nowrap tracking-[-0.004em]">{text}</span>
    </button>
  );
}

function Sidebar() {
  return (
    <aside className="relative h-[1668px] w-[598px] shrink-0 bg-[#f0f2f6] px-11 pt-16">
      <nav className="flex flex-col gap-3 text-[25.2px] leading-none text-[#5a5c66]">
        <a className="flex h-14 items-center rounded-[16px] bg-[#dbdfe8] px-4 pb-px font-bold text-[#31333f] tracking-[-0.02em]">Map</a>
        <a className="flex h-14 items-center px-4 pb-px tracking-[-0.004em]">Regional Comparison</a>
        <a className="flex h-14 items-center px-4 pb-px tracking-[-0.004em]">Trendline</a>
      </nav>
      <div className="mt-11 h-0.5 bg-[#cacbd1]" />

      <h2 className="mt-[77px] flex h-12 items-center gap-[7px] text-[36px] font-bold tracking-[-0.025em]">
        <KnobsIcon />
        Map Controls
      </h2>

      <div className="mt-[43px]">
        <Label icon={<CalendarIcon />} text="Year Range" help="far" />
      </div>
      <div className="mt-[14px] font-[Liberation_Mono] text-[28px] leading-7">
        <div className="-ml-3 flex gap-[185px] text-[#ed5c53]">
          <span>1996</span>
          <span>2040</span>
        </div>
        <div className="relative mt-[14px] h-2 rounded bg-[#dbdfe8]">
          <div className="h-2 w-[274px] rounded bg-[#ed5c53]" />
          <span className="absolute -left-3 -top-2 size-6 rounded-full bg-[#ed5c53]" />
          <span className="absolute -top-2 left-[262px] size-6 rounded-full bg-[#ed5c53]" />
        </div>
        <div className="mt-[29px] flex justify-between">
          <span>1996</span>
          <span>2078</span>
        </div>
      </div>

      <div className="mt-[44px]">
        <Label icon={<MapIcon className="h-6 w-7" />} text="Map Type" help="near" />
      </div>
      <div className="mt-[31px] flex flex-col gap-[19px] text-[28.8px] leading-none">
        <label className="flex h-8 items-center gap-4">
          <span className="flex size-8 items-center justify-center rounded-full bg-[#ed5c53]">
            <span className="size-3 rounded-full bg-white" />
          </span>
          <span className="-mt-[2px]">Choropleth</span>
        </label>
        <label className="flex h-8 items-center gap-4">
          <span className="size-8 rounded-full border-2 border-[#a7a8b1] bg-[#f9f9fb]" />
          <span className="-mt-[2px]">Circle Bubble</span>
        </label>
      </div>

      <div className="mt-12">
        <Label icon={<ChartIcon className="ml-0.5 h-7 w-6" />} text="Choose Index" help="far" />
      </div>
      <div className="mt-[18px] flex h-20 items-center justify-between rounded-[16px] border-4 border-[#ebecf0] bg-white pl-6 pr-[30px] text-[28.8px] leading-none">
        <span className="mt-0.5 tracking-[-0.003em]">Completion Index</span>
        <Chevron w="4.2" />
      </div>
      <div className="mt-8 flex h-[97px] items-center justify-between rounded-[16px] border-2 border-[#c9cad0] pb-1 pl-8 pr-[42px]">
        <Label icon={<InfoIcon />} text="Index Definition" />
        <Chevron w="3" />
      </div>

      <h3 className="mt-[55px] flex h-10 items-center gap-[7px] text-[32.4px] font-bold tracking-[-0.026em]">
        <InboxIcon />
        Export Data
      </h3>
      <div className="mt-9 flex flex-col gap-8">
        <ExportButton icon={<ChartIcon className="ml-[2px] h-8 w-[27px]" />} text="Download Original Dataset" width="w-[447px]" />
        <ExportButton icon={<ChartIcon className="ml-[2px] h-8 w-[27px]" />} text="Export Country Rankings" width="w-[421px]" />
        <ExportButton icon={<GlobeIcon />} text="Export Regional Stats" width="w-[373px]" />
      </div>
      <div className="absolute left-[582px] top-24 h-[1499px] w-3 rounded-full bg-[#a3a4ad]" />
    </aside>
  );
}

function Card({ flag, medal, name, rank, value }: { flag: ReactNode; medal: ReactNode; name: string; rank: string; value: string }) {
  return (
    <div className="h-[363px] shrink-0 rounded-[20px] border-l-8 border-[#6b7fe3] bg-white pl-[49px] pt-[60px] shadow-[0_4px_16px_rgba(0,0,0,0.12)]">
      <div className="flex h-[60px] items-center pl-0.5">
        {flag}
        <span className="ml-[21px] flex">{medal}</span>
        <span className="ml-[18px] text-[43.2px] font-bold leading-none tracking-[-0.019em] text-[#2d3c4f]">{name}</span>
      </div>
      <p className="mt-[68px] h-10 text-[27px] leading-10 text-[#555]">
        <strong className="tracking-[-0.014em] text-[#6b7fe3]">Rank:</strong> {rank}
      </p>
      <p className="mt-[25px] h-10 text-[27px] leading-10 text-[#555]">
        <strong className="tracking-[-0.01em] text-[#6b7fe3]">Completion Index:</strong> {value}
      </p>
    </div>
  );
}

export default function App() {
  return (
    <div className="relative flex h-[1668px] w-[2940px] overflow-hidden bg-white font-['Noto_Sans_CJK_SC',sans-serif] text-[#31333f]">
      <div className="absolute left-0 top-0 z-10 h-2 w-full border-t-2 border-white bg-[#dadcd8] pt-0.5">
        <div className="h-1 bg-[linear-gradient(90deg,#ed5c53,#f6a96b_50%,#fffb8f)]" />
      </div>
      <Sidebar />
      <main className="flex h-[1668px] flex-1 flex-col">
        <header className="flex h-32 shrink-0 items-center justify-end pr-[59px]">
          <span className="-mt-0.5 mr-[47px] text-[25.2px] leading-none">Deploy</span>
          <svg viewBox="0 0 10 30" className="h-[30px] w-[10px]" fill="#31333f">
            <circle cx="5" cy="5" r="3.300" />
            <circle cx="5" cy="15" r="3.300" />
            <circle cx="5" cy="25" r="3.300" />
          </svg>
        </header>
        <div className="ml-40 w-[2000px]">
          <section className="mt-[100px] flex h-[368px] flex-col items-center rounded-[20px] bg-[linear-gradient(90deg,#697fe4,#704c9a)] pt-[100px] text-white shadow-[0_8px_32px_rgba(102,126,234,0.3)]">
            <h1 className="flex h-24 items-center gap-[17px] pr-[46px] text-[72px] font-bold leading-none tracking-[-0.003em] [text-shadow:0_4px_8px_rgba(0,0,0,0.2)]">
              <MapIcon className="h-[70px] w-20 drop-shadow-[0_4px_4px_rgba(0,0,0,0.2)]" />
              Global Education Disparity Map
            </h1>
            <p className="mt-[54px] h-12 text-[31.500px] leading-[48px] text-white/90">
              Explore education metrics across countries with interactive visualizations
            </p>
          </section>
          <div className="mt-[95px] flex gap-8">
            <section className="w-[1317px]">
              <h2 className="mb-10 flex h-20 items-center gap-[14px] text-[65px] font-bold leading-none tracking-[-0.026em]">
                <MapIcon className="h-[63px] w-[72px]" />
                Interactive World Map
              </h2>
              <WorldMap />
            </section>
            <section className="flex-1">
              <h2 className="flex h-20 items-center gap-[21px] pl-1.5 text-[65px] font-bold leading-none tracking-[-0.026em]">
                <ChartIcon className="h-[72px] w-[60px]" />
                Quick Insights
              </h2>
              <h3 className="mt-[65px] flex h-[60px] items-center gap-3 pl-0.5 text-[50.400px] font-bold leading-none tracking-[-0.026em]">
                <TrophyIcon />
                Top Performers
              </h3>
              <div className="mt-[70px] flex flex-col gap-16">
                <Card flag={<BarbadosFlag />} medal={<Medal n="1" light="#f4c43c" dark="#d39a22" />} name="Barbados" rank="#1" value="0.975" />
                <Card flag={<KazakhstanFlag />} medal={<Medal n="2" light="#b5b5b5" dark="#8c8c8c" />} name="Kazakhstan" rank="#2" value="0.966" />
              </div>
            </section>
          </div>
        </div>
      </main>
    </div>
  );
}
